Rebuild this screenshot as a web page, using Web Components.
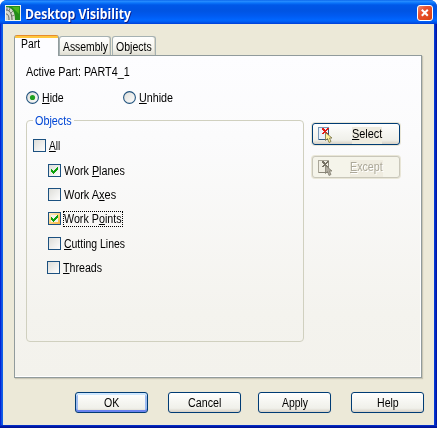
<!DOCTYPE html>
<html lang="en"><head><meta charset="utf-8"><title>Desktop Visibility</title>
<style>
html,body{margin:0;background:#fff;overflow:hidden}
body{font:12px/14px "Liberation Sans",Arial,sans-serif;color:#000}
u{text-decoration:underline;text-decoration-thickness:1px;text-underline-offset:1px;text-decoration-skip-ink:none}
</style></head><body>
<xp-window>
  <fit-text slot="title" w="106" style="font:bold 14px/16px 'Open Sans',sans-serif;text-shadow:1px 1px 0 #0a1883">Desktop Visibility</fit-text>
  <xp-tabs>
    <xp-tab slot="tab" active><fit-text w="19">Part</fit-text></xp-tab>
    <xp-tab slot="tab" style="width:52px"><fit-text w="45">Assembly</fit-text></xp-tab>
    <xp-tab slot="tab" style="width:44px;margin-left:1px"><fit-text w="36">Objects</fit-text></xp-tab>
    <fit-text w="104" style="margin:9px 0 0 11px">Active Part: PART4_1</fit-text>
    <xp-row style="margin:12px 0 0 11px">
      <xp-radio checked style="width:97px"><fit-text w="22"><u>H</u>ide</fit-text></xp-radio>
      <xp-radio><fit-text w="34"><u>U</u>nhide</fit-text></xp-radio>
    </xp-row>
    <xp-row style="margin:10px 0 0 11px">
      <xp-group>
        <fit-text slot="legend" w="37">Objects</fit-text>
        <xp-check style="margin-bottom:12px"><fit-text w="11"><u>A</u>ll</fit-text></xp-check>
        <xp-check checked style="margin:0 0 11px 15px"><fit-text w="61">Work <u>P</u>lanes</fit-text></xp-check>
        <xp-check style="margin:0 0 11px 15px"><fit-text w="52">Work A<u>x</u>es</fit-text></xp-check>
        <xp-check checked hot style="margin:0 0 12px 15px"><fit-text w="58">Work P<u>o</u>ints</fit-text></xp-check>
        <xp-check style="margin:0 0 11px 15px"><fit-text w="61"><u>C</u>utting Lines</fit-text></xp-check>
        <xp-check style="margin-left:14px"><fit-text w="39"><u>T</u>hreads</fit-text></xp-check>
      </xp-group>
      <div style="margin:8px 0 0 8px">
        <xp-button tool style="margin-bottom:11px"><fit-text w="30"><u>S</u>elect</fit-text></xp-button>
        <xp-button tool disabled><fit-text w="33"><u>E</u>xcept</fit-text></xp-button>
      </div>
    </xp-row>
  </xp-tabs>
  <xp-row style="margin:14px 0 0 72px">
    <xp-button default style="margin-right:20px"><fit-text w="15">OK</fit-text></xp-button>
    <xp-button style="margin-right:17px"><fit-text w="33">Cancel</fit-text></xp-button>
    <xp-button style="margin-right:20px"><fit-text w="26">Apply</fit-text></xp-button>
    <xp-button><fit-text w="22">Help</fit-text></xp-button>
  </xp-row>
</xp-window>
<script>
const define=(name,html,setup)=>customElements.define(name,class extends HTMLElement{
  constructor(){super();this.attachShadow({mode:'open'}).innerHTML='<style>*{box-sizing:border-box}:host{box-sizing:border-box}</style>'+(typeof html==='function'?html(this):html);}
  connectedCallback(){if(setup)setup(this);}
});
// Condenses a label horizontally to the width given in its w attribute.
define('fit-text',`<style>:host{display:block;flex:none;white-space:pre}span{display:inline-block;transform-origin:0 50%}</style><span><slot></slot></span>`,el=>{
  const w=+el.getAttribute('w'),s=el.shadowRoot.querySelector('span');
  el.style.width=w+'px';
  s.style.transform=`scaleX(${w/s.offsetWidth})`;
});
define('xp-row',`<style>:host{display:flex;align-items:flex-start}</style><slot></slot>`);
define('xp-window',`<style>
:host{display:flex;flex-direction:column;width:437px;height:428px;border-radius:7px 7px 0 0;overflow:hidden;padding:0 3px 3px;background:linear-gradient(90deg,#0019cf 0,#0831d9 1px,#166aee 2px,#0855dd 3px,#0855dd 434px,#0441d8 434px,#001dbc 436px,#00138c 437px)}
header{height:24px;flex:none;margin:0 -3px;padding:5px 4px 0 5px;display:flex;color:#fff;background:linear-gradient(#0058e6 0,#2b90ff 1px,#0a74fa 3px,#0058e8 5px,#0054e3 11px,#005bf2 16px,#0066ff 20px,#005bf0 22px,#003dd7 24px)}
header svg{flex:none}
::slotted([slot=title]){margin:1px 0 0 4px}
.x{margin-left:auto}
main{flex:1;background:#ece9d8}
footer{height:3px;margin:0 -3px -3px;background:linear-gradient(#0841d9,#0019b0 1px,#00138c)}
</style><header>
<svg width="16" height="16" viewBox="0 0 16 16"><path fill="#f4f6ea" d="M0 0h16v16H0z"/><path fill="#238d18" d="M1 1h14v14H1z"/><path fill="#49b51c" d="M7 2h7v7l-3-3z"/><path d="M1 2c6 0 9 5 9 13H1z" fill="#d5d8ce"/><path d="M1 5c4 0 6 4 6 10M1 9c2 0 3 2 3 6" stroke="#5b6156" fill="none"/><path d="M2 2v3M5 3L4 6M8 6L6 8M9.500 10L7 11" stroke="#565c50" stroke-width=".7"/></svg>
<slot name="title"></slot>
<svg class="x" width="16" height="16" viewBox="0 0 16 16"><defs><linearGradient id="r" x2="1" y2="1"><stop stop-color="#f0937a"/><stop offset=".35" stop-color="#ea5230"/><stop offset="1" stop-color="#d8400f"/></linearGradient></defs><rect x=".5" y=".5" width="15" height="15" rx="2.5" fill="url(#r)" stroke="#fff"/><path d="M4.800 4.800l6 6m0-6l-6 6" stroke="#fff" stroke-width="2"/></svg>
</header><main><slot></slot></main><footer></footer>`);
define('xp-tabs',`<style>
:host{display:block;padding:11px 12px 0 11px}
.tabs{display:flex;align-items:flex-end;height:21px;margin-bottom:-1px;position:relative}
.panel{height:323px;border:1px solid #919b9c;background:linear-gradient(#fdfdff,#fbfbfc 25%,#f4f3ee 80%,#f3f2ec);box-shadow:inset -1px -1px #fff,1px 1px 1px #c9c6b5;display:flow-root}
</style><div class="tabs"><slot name="tab"></slot></div><div class="panel"><slot></slot></div>`);
define('xp-tab',`<style>
:host{display:flex;justify-content:center;height:19px;padding-top:3px;margin-bottom:1px;border:1px solid #a5b1b2;border-bottom:0;border-radius:3px 3px 0 0;background:linear-gradient(#fff,#f5f4ed 65%,#dfddd1);box-shadow:inset -1px 0 #d9d6c9}
:host([active]){width:45px;height:21px;margin:0;padding:2px 0 0 6px;justify-content:flex-start;border:0;border-left:1px solid #919b9c;border-right:1px solid #919b9c;background:linear-gradient(#e68b2c 0 1px,#ffc73c 1px 3px,#fdfdff 3px);box-shadow:none}
</style><slot></slot>`);
define('xp-radio',el=>`<style>:host{display:flex;height:14px;gap:3px;align-items:flex-start}svg{flex:none}</style>
<svg width="13" height="13"><defs><linearGradient id="g" x2="1" y2="1"><stop stop-color="#dcdcd7"/><stop offset="1" stop-color="#fff"/></linearGradient></defs><circle cx="6.5" cy="6.5" r="5.9" fill="url(#g)" stroke="#21537e" stroke-width="1.1"/>${el.hasAttribute('checked')?'<circle cx="6.5" cy="6.5" r="2.6" fill="#21a121"/>':''}</svg><slot></slot>`);
define('xp-check',el=>`<style>:host{display:flex;height:13px;gap:3px}svg{flex:none}
:host([hot]) .l{outline:1px dotted #000;height:14px}</style>
<svg width="13" height="13"><defs><linearGradient id="g" x2="1" y2="1"><stop stop-color="#dcdcd7"/><stop offset="1" stop-color="#fff"/></linearGradient><linearGradient id="h" x2="1" y2="1"><stop stop-color="#fff0cf"/><stop offset="1" stop-color="#f8b334"/></linearGradient></defs>
<rect x=".5" y=".5" width="12" height="12" fill="url(#${el.hasAttribute('hot')?'h':'g'})" stroke="#1c5180"/>${el.hasAttribute('hot')?'<path fill="#f3f2eb" d="M3 3h7v7H3z"/>':''}${el.hasAttribute('checked')?'<path shape-rendering="crispEdges" fill="#0ca10c" d="M3 5h1v1h1v1h1V6h1V5h1V4h1V3h1v3H9v1H8v1H7v1H6v1H5V9H4V8H3z"/>':''}</svg><div class="l"><slot></slot></div>`);
define('xp-group',`<style>:host{display:block;width:278px;height:222px;margin-top:5px;border:1px solid #d0d0bf;border-radius:4px}
.g{display:flex;width:41px;height:14px;margin:-7px 0 11px 6px;padding-left:2px;background:#fbfbfc;color:#0046d5}</style><div class="g"><slot name="legend"></slot></div><div style="padding-left:6px"><slot></slot></div>`);
define('xp-button',el=>{const d=el.hasAttribute('disabled');return `<style>
:host{display:flex;width:73px;height:21px;justify-content:center;padding-top:3px;border:1px solid #003c74;border-radius:3px;background:linear-gradient(#fff,#f6f6f2 45%,#f0f0ea 80%,#d6d0c5);box-shadow:0 0 0 1px #e9e6d7}
:host([default]){box-shadow:inset 0 -2px #6982ee,inset 0 2px #cee7ff,inset 0 0 0 2px #9ebcf0,0 0 0 1px #e9e6d7}
:host([tool]){width:88px;height:22px;justify-content:flex-start;padding:3px 0 0 5px}
:host([disabled]){background:#f5f4ea;border-color:#c9c7ba;color:#aca899}
:host([tool]) ::slotted(*){margin-left:auto;margin-right:17px;background:#efece0}
:host([disabled]) ::slotted(*){margin-right:16px!important;text-shadow:1px 1px #fff}
svg{flex:none}</style>${el.hasAttribute('tool')?`<svg width="15" height="17" viewBox="0 0 15 17" shape-rendering="crispEdges"><path d="M.5.5h10v12H.5z" fill="${d?'#f0eee3':'#e9f1fa'}" stroke="${d?'#aaa699':'#7998b7'}"/><path d="M10.500 1v12M1 12.500h9" stroke="${d?'#8a8679':'#315779'}" fill="none"/><path d="M4 1h2v1h1v1h1V2h1V1h2v1h-1v1H9v1H8v1h1v1h1v1H8V6H6v1H4V6h1V5h1V4H5V3H4z" fill="${d?'#767164':'#e51b13'}"/><path d="M7.500 5.500v8l2-2 1.500 4 2-1-1.500-3.500h2.500z" fill="${d?'#b1aca0':'#fff29a'}" stroke="${d?'#817d70':'#746f42'}" stroke-width=".8" shape-rendering="auto"/></svg>`:''}<slot></slot>`});
</script></body></html>
